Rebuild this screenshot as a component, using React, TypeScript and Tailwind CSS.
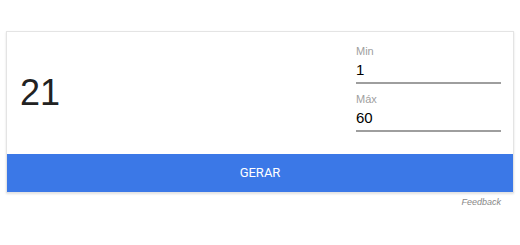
export default function App() {
  return (
    <div
      className="w-[520px] h-[245px] bg-white pt-[31px] px-[6px]"
      style={{ fontFamily: "'Liberation Sans', Arial, sans-serif" }}
    >
      <div className="border border-[#e4e4e4] shadow-[0_1px_2px_rgba(0,0,0,0.12)]">
        <div className="flex h-[122px] justify-between pl-[13px] pr-[12px]">
          <div className="self-center text-[36px] leading-none text-[#222]">21</div>
          <div className="w-[145px] flex flex-col pt-[13px]">
            <div className="text-[11px] leading-[13px] text-[#a0a0a0]">Min</div>
            <div className="text-[15px] leading-[17px] mt-[3px] text-black">1</div>
            <div className="h-[2px] bg-[#9e9e9e] mt-[4px]" />
            <div className="text-[11px] leading-[13px] text-[#a0a0a0] mt-[9px]">Máx</div>
            <div className="text-[15px] leading-[17px] mt-[3px] text-black">60</div>
            <div className="h-[2px] bg-[#9e9e9e] mt-[4px]" />
          </div>
        </div>
        <div
          className="h-[38px] bg-[#3b78e7] flex items-center justify-center text-white text-[13px]"
          style={{ fontFamily: "Roboto, 'Liberation Sans', sans-serif" }}
        >
          GERAR
        </div>
      </div>
      <div className="flex justify-end pr-[13px] mt-[3px]">
        <span className="text-[9px] italic text-[#888]">Feedback</span>
      </div>
    </div>
  );
}
